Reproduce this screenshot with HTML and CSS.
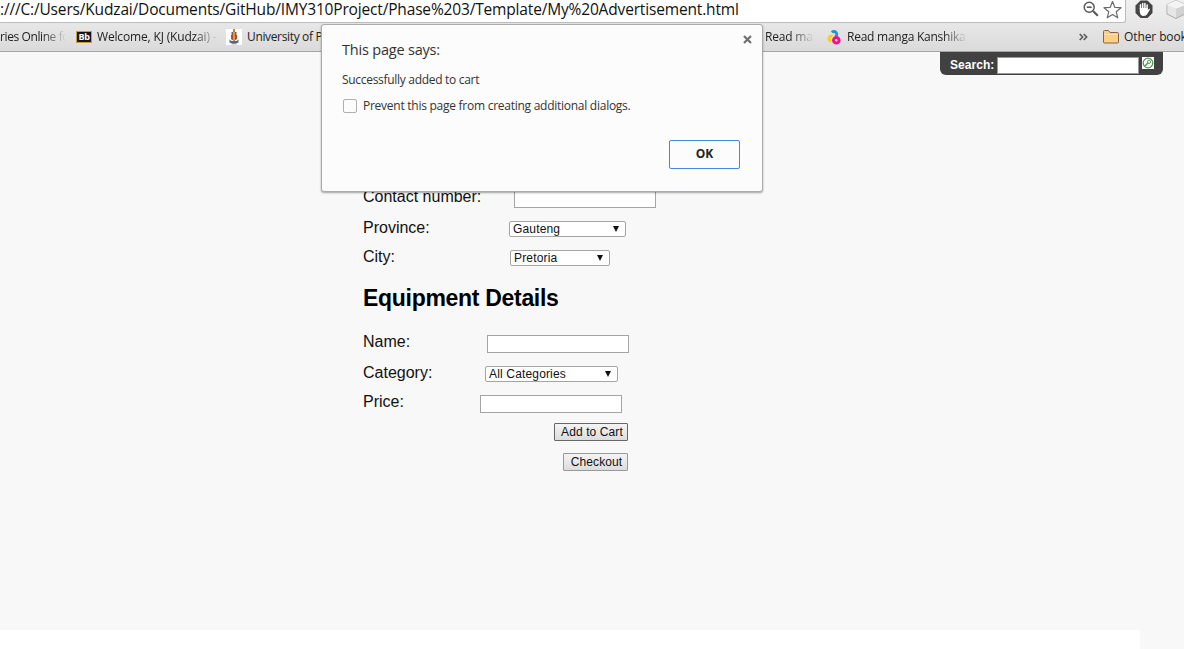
FILE: index.html
```html
<!DOCTYPE html>
<html lang="en">
<head>
<meta charset="utf-8">
<title>My Advertisement</title>
<link rel="stylesheet" href="styles.css">
</head>
<body>
<header class="chrome">
  <div class="toolbar">
    <div class="omnibox">
      <span class="url">:///C:/Users/Kudzai/Documents/GitHub/IMY310Project/Phase%203/Template/My%20Advertisement.html</span>
      <svg class="zoom-icon" width="17" height="17" viewBox="0 0 17 17" fill="none" stroke="#5a5a5a"><circle cx="6.2" cy="7.2" r="5" stroke-width="1.5"/><path d="M3.700 7.200h5" stroke-width="1.600"/><path d="M10 11l4.800 4.800" stroke-width="2.200"/></svg>
      <svg class="star-icon" width="19" height="19" viewBox="0 0 19 19"><path d="M9.500 1.500l2.300 5.800 6.200.4-4.800 4 1.600 6.100-5.300-3.400-5.300 3.400 1.600-6.100-4.800-4 6.200-.4z" fill="#fff" stroke="#6b6b6b" stroke-width="1.200" stroke-linejoin="round"/></svg>
    </div>
    <svg class="hand-icon" width="18" height="19" viewBox="0 0 18 19"><path d="M5.500 .5h7L17.500 5.500v7.500L12.500 18h-7L.5 13V5.500z" fill="#444"/><path d="M5.500 9V4.700M7.700 8.500V3.400M9.900 8.500V3.400M12.100 9V4.900" stroke="#fff" stroke-width="1.500" stroke-linecap="round"/><path d="M4.750 8h8.100v2l1.500-1.500.7.700-2.900 5q-1 1.800-3.400 1.800-4 0-4-5z" fill="#fff"/></svg>
    <svg class="cube-icon" width="20" height="20" viewBox="0 0 20 20" stroke="#aaa" stroke-width="1" stroke-linejoin="round"><path d="M1 4.500l9-4 9 4v9.500l-9 4.500-9-4.500z" fill="#d2d2d2"/><path d="M1.500 4.700l8.500-3.700 8.500 3.700-8.500 3.500z" fill="#f4f4f4" stroke="#f8f8f8"/><path d="M1.500 5l8.500 3.500v9.200l-8.500-4.200z" fill="#e6e6e6" stroke="none"/></svg>
  </div>
  <nav class="bookmarks">
    <span class="bm bm-first">ries Online for</span>
    <span class="bb">Bb</span>
    <span class="bm bm-welcome">Welcome, KJ (Kudzai) -</span>
    <svg class="crest" width="16" height="16" viewBox="0 0 16 16"><path d="M0 0h16v16H0z" fill="#fff"/><path d="M7 0h2v3H7z" fill="#b98532"/><path d="M5.500 3h5v3h-5z" fill="#8b5a5a"/><path d="M5 6h6v4l-3 2-3-2z" fill="#b24c28"/><path d="M7.200 3h1.600v8H7.200z" fill="#e0ad48"/><path d="M3.500 10.500l2 1.500h5l2-1.500v3l-4.500 1.500-4.500-1.500z" fill="#3f6f9c"/><path d="M5.500 14h5v1.300h-5z" fill="#b98532"/></svg>
    <span class="bm bm-univ">University of Pretoria</span>
    <span class="bm bm-manga">Read manga</span>
    <svg class="rings" width="16" height="16" viewBox="0 0 16 16" fill="none" stroke-width="3"><path d="M6 3.500a2.700 2.700 0 1 1 3 4.300" stroke="#2196d3"/><circle cx="10.300" cy="11.300" r="2.800" stroke="#ec168c"/><path d="M6.500 7.200a2.700 2.700 0 1 0-1.500 5.200" stroke="#f6cf17"/></svg>
    <span class="bm bm-kan">Read manga Kanshikan</span>
    <svg class="more" width="9" height="8" viewBox="0 0 9 8" fill="none" stroke="#555" stroke-width="1.500"><path d="M.7 1L3.700 4l-3 3M4.700 1L7.700 4l-3 3"/></svg>
    <span class="divider"></span>
    <svg class="folder" width="16" height="14" viewBox="0 0 16 14"><path d="M.5 12V1.500q0-1 1-1h4l1.500 2h7.500q1 0 1 1V12q0 1-1 1h-13q-1 0-1-1z" fill="#fbd083" stroke="#8a6342"/><path d="M1.500 4.500h13" stroke="#ffe6b4"/></svg>
    <span class="bm bm-other">Other bookmarks</span>
  </nav>
</header>
<main class="page">
  <form class="search"><label>Search:</label><span class="search-field"></span>
    <svg width="12" height="12" viewBox="0 0 12 12" fill="none" stroke="#4a9a55"><path d="M0 0h12v12H0z" fill="#fff" stroke="none"/><circle cx="6" cy="6" r="4.800" stroke-width="1.300"/><circle cx="7" cy="4.800" r="1.600"/><path d="M5.800 6L3 9" stroke-width="1.500"/></svg>
  </form>
  <form class="details">
    <div class="row contact"><label>Contact number:</label><span class="field"></span></div>
    <div class="row province"><label>Province:</label><span class="select">Gauteng<i></i></span></div>
    <div class="row city"><label>City:</label><span class="select">Pretoria<i></i></span></div>
    <h2>Equipment Details</h2>
    <div class="row name"><label>Name:</label><span class="field"></span></div>
    <div class="row category"><label>Category:</label><span class="select">All Categories<i></i></span></div>
    <div class="row price"><label>Price:</label><span class="field"></span></div>
    <div class="actions"><button class="btn add" type="button">Add to Cart</button><button class="btn out" type="button">Checkout</button></div>
  </form>
</main>
<footer class="bottom"></footer>
<section class="dialog" role="dialog">
  <svg class="close" width="9" height="9" viewBox="0 0 9 9" stroke="#707070" stroke-width="2.200"><path d="M1 1l7 7M8 1L1 8"/></svg>
  <h1>This page says:</h1>
  <p>Successfully added to cart</p>
  <div class="check"><i></i><span>Prevent this page from creating additional dialogs.</span></div>
  <button class="ok" type="button">OK</button>
</section>
</body>
</html>
```
FILE: styles.css
```css
* { box-sizing: border-box; }
body { margin: 0; width: 1184px; height: 649px; overflow: hidden; position: relative; display: flex; flex-direction: column; background: #f8f8f8; font-family: "Liberation Sans", Arial, sans-serif; color: #111; }
svg { flex: none; display: block; }
.chrome { height: 52px; background: linear-gradient(#f0f0f0, #e8e8e8 22px, #dadada); border-bottom: 1px solid #a5a5a5; }
.toolbar { height: 23px; display: flex; align-items: flex-start; }
.omnibox { flex: none; width: 1126px; height: 23px; background: #fff; border: solid #bcbcbc; border-width: 0 1px 1px 0; border-radius: 0 0 3px 0; display: flex; }
.url { flex: none; width: 1083px; font: 15.5px/19px "Open Sans", sans-serif; letter-spacing: -.165px; white-space: nowrap; color: #111; }
.star-icon { margin-left: 3px; }
.hand-icon { margin-left: 9px; }
.cube-icon { margin-left: 13px; }
.bookmarks { height: 28px; display: flex; align-items: center; overflow: hidden; }
.bm { flex: none; overflow: hidden; white-space: nowrap; font: 12px/18px "Open Sans", sans-serif; letter-spacing: -.2px; color: #222; }
.bm-first, .bm-welcome, .bm-manga, .bm-kan { -webkit-mask-image: linear-gradient(to left, transparent, #000 24px); mask-image: linear-gradient(to left, transparent, #000 24px); }
.bm-first { width: 66px; letter-spacing: -.4px; }
.bb { flex: none; margin-left: 10px; width: 16px; height: 12px; background: #151515; border: 1px solid #c99b3d; color: #fff; font: bold 9px/10px "Open Sans", sans-serif; text-align: center; letter-spacing: -.3px; }
.bm-welcome { margin-left: 5px; width: 121px; letter-spacing: -.16px; }
.crest { margin-left: 8px; }
.bm-univ { margin-left: 5px; width: 130px; letter-spacing: -.35px; }
.bm-manga { margin-left: 388px; width: 49px; }
.rings { margin-left: 12px; }
.bm-kan { margin-left: 5px; width: 120px; letter-spacing: -.25px; }
.more { margin-left: 112px; }
.divider { width: 1px; height: 22px; margin-left: 8px; background: #cbd3da; }
.folder { margin-left: 7px; }
.bm-other { margin-left: 5px; letter-spacing: -.1px; }
.page { height: 578px; }
.search { margin: 0 0 0 940px; width: 223px; height: 23px; background: #414141; border-radius: 0 0 6px 6px; display: flex; padding: 5px 0 0 10px; }
.search label { width: 47px; color: #fff; font: bold 12px/17px "Liberation Sans", sans-serif; letter-spacing: .05px; }
.search-field { width: 142px; height: 17px; background: #fff; border: 1px solid #999; }
.search svg { margin-left: 3px; }
.details { margin: 113px 0 0 363px; width: 300px; }
.row { display: flex; align-items: flex-start; font-size: 16px; line-height: 18px; }
.row label { width: 146px; white-space: nowrap; }
.field { width: 142px; height: 18px; background: #fff; border: 1px solid #a5a5a5; }
.select { height: 16px; background: #fff; border: 1px solid #a5a5a5; border-radius: 2px; font-size: 12px; line-height: 14px; letter-spacing: .16px; padding: 0 6px 0 3px; display: flex; justify-content: space-between; align-items: center; white-space: nowrap; }
.select i { border: solid transparent; border-width: 6px 3px 0; border-top-color: #111; }
.contact { height: 31px; margin-top: 1px; }
.contact label { width: 151px; }
.contact .field { margin-top: 2px; }
.province { height: 29px; }
.province .select { width: 117px; margin-top: 2px; }
.city label { width: 147px; }
.city { height: 37px; }
.city .select { width: 100px; margin-top: 2px; }
h2 { margin: 0; height: 48px; font-size: 23px; line-height: 27px; letter-spacing: -.3px; white-space: nowrap; color: #000; }
.name { height: 31px; }
.name label { width: 124px; }
.name .field { margin-top: 2px; }
.category { height: 29px; }
.category label { width: 122px; }
.category .select { width: 133px; margin-top: 2px; }
.price { height: 30px; }
.price label { width: 117px; }
.price .field { margin-top: 2px; }
.actions { width: 265px; display: flex; flex-direction: column; align-items: flex-end; gap: 12px; }
.btn { height: 18px; border: 1px solid #999; border-radius: 1px; background: linear-gradient(#f4f4f4, #dcdcdc); font: 12px/14px "Liberation Sans", sans-serif; letter-spacing: .1px; color: #111; padding: 0 0 0 2px; white-space: nowrap; }
.add { width: 74px; border-color: #666; }
.out { width: 65px; }
.bottom { width: 1140px; height: 19px; background: #fff; }
.dialog { position: absolute; left: 321px; top: 24px; width: 442px; height: 168px; background: #fcfcfc; border: 1px solid #aaa; border-radius: 3px; box-shadow: 0 1px 2px rgba(0,0,0,.35); padding: 15px 22px 0 20px; font: 12px/18px "Open Sans", sans-serif; color: #333; display: flex; flex-direction: column; }
.close { position: absolute; left: 421px; top: 10px; }
.dialog h1 { margin: 0; font-weight: 400; font-size: 14.5px; line-height: 20px; letter-spacing: -.2px; }
.dialog p { margin: 11px 0 0; letter-spacing: -.3px; }
.check { margin-top: 8px; display: flex; align-items: center; gap: 6px; padding-left: 1px; letter-spacing: -.26px; }
.check i { width: 14px; height: 14px; border: 1px solid #b0b0b0; border-radius: 2px; }
.ok { align-self: flex-end; margin-top: 25px; width: 71px; height: 29px; padding: 0 0 2px; background: #fcfcfc; border: 1px solid #4684e8; border-radius: 2px; font: bold 12px "Open Sans", sans-serif; color: #222; }
```
